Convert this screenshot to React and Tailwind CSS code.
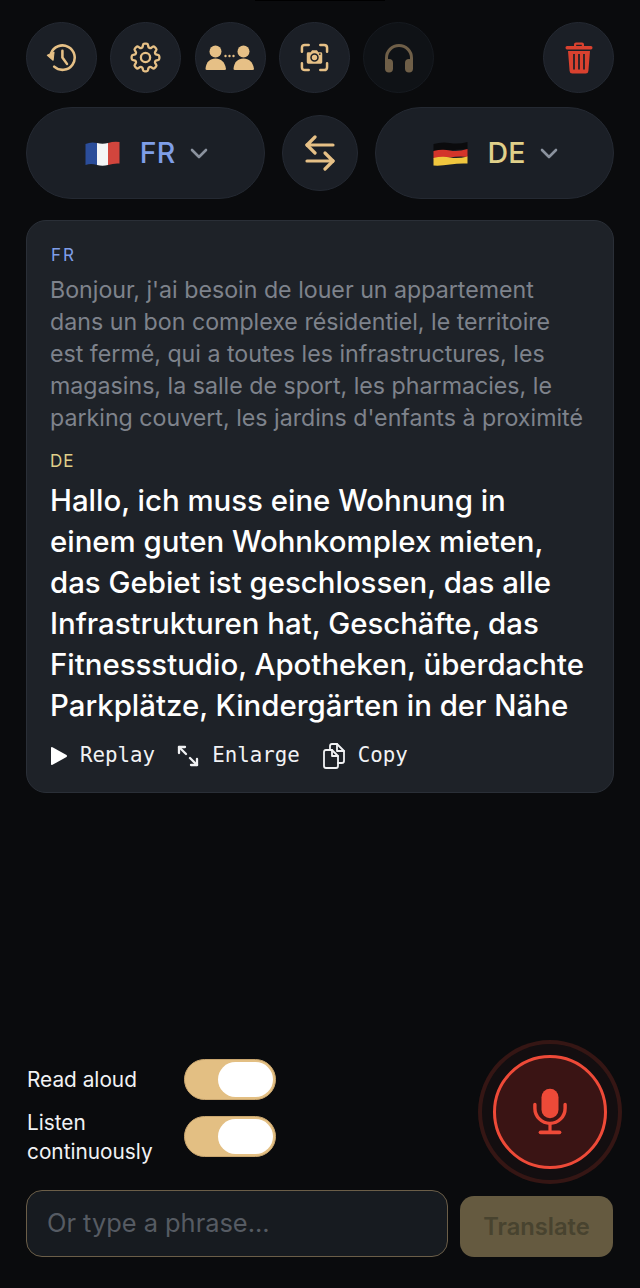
import React from "react";
import { HiOutlineCog8Tooth } from "react-icons/hi2";

const Round = ({ children, dim }) => (
  <div className={`w-[71px] h-[71px] rounded-full border flex items-center justify-center shrink-0 ${dim ? "bg-[#0f1216] border-[#161a20]" : "bg-[#1b1f26] border-[#242932]"}`}>
    {children}
  </div>
);

const HistoryIcon = () => (
  <svg width="31" height="31" viewBox="0 0 34 34" fill="none" stroke="#e6c086" strokeWidth="2.8" strokeLinecap="round" strokeLinejoin="round">
    <path d="M5.5 12.5 A13.4 13.4 0 1 1 9 27" />
    <path d="M1.5 14.5 L8.8 11.2 L7.8 20 Z" fill="#e6c086" strokeWidth="1.2" />
    <path d="M18 9.5 V17 L23 24" />
  </svg>
);

const PeopleIcon = () => (
  <svg width="50" height="26" viewBox="0 0 50 26" fill="#e6c086">
    <circle cx="10.5" cy="6.5" r="6" />
    <path d="M0.5 24 C1 17 5 13.5 10.5 13.5 S20 17 21 24 Q21 25 19.5 25 H2 Q0.5 25 0.5 24 Z" />
    <circle cx="38.5" cy="6.5" r="6" />
    <path d="M28.5 24 C29 17 33 13.5 38.5 13.5 S48 17 49 24 Q49 25 47.5 25 H30 Q28.5 25 28.5 24 Z" />
    <circle cx="20.5" cy="11" r="1.2" />
    <circle cx="24.5" cy="11" r="1.2" />
    <circle cx="28.5" cy="11" r="1.2" />
  </svg>
);

const CameraScanIcon = () => (
  <svg width="29" height="29" viewBox="0 0 30 30" fill="none">
    <g stroke="#e6c086" strokeWidth="2.6" strokeLinecap="round">
      <path d="M9 2 H5 Q2 2 2 5 V9" />
      <path d="M21 2 H25 Q28 2 28 5 V9" />
      <path d="M9 28 H5 Q2 28 2 25 V21" />
      <path d="M21 28 H25 Q28 28 28 25 V21" />
    </g>
    <path d="M7 11 Q7 9.5 8.5 9.5 H11 L12.5 7.5 H17.5 L19 9.5 H21.5 Q23 9.5 23 11 V20 Q23 21.5 21.5 21.5 H8.5 Q7 21.5 7 20 Z" fill="#e6c086" />
    <circle cx="15" cy="15" r="3.6" fill="#e6c086" stroke="#1b1f26" strokeWidth="1.6" />
    <circle cx="20.5" cy="11.5" r="0.9" fill="#1b1f26" />
  </svg>
);

const HeadphonesIcon = () => (
  <svg width="30" height="30" viewBox="0 0 30 30" fill="none">
    <path d="M2.5 20 V15 A12.5 12.5 0 0 1 27.5 15 V20" stroke="#6f5f48" strokeWidth="3" />
    <rect x="1" y="16" width="8" height="13.5" rx="4" fill="#6f5f48" />
    <rect x="21" y="16" width="8" height="13.5" rx="4" fill="#6f5f48" />
  </svg>
);

const TrashIcon = () => (
  <svg width="28" height="32" viewBox="0 0 28 32" fill="#d9412f">
    <path d="M9 4 V2.5 Q9 0.5 11 0.5 H17 Q19 0.5 19 2.5 V4 H26 Q27.5 4 27.5 5.5 Q27.5 7.4 26 7.4 H2 Q0.5 7.4 0.5 5.5 Q0.5 4 2 4 Z M11.2 4 H16.8 V2.7 H11.2 Z" fillRule="evenodd" />
    <path d="M3 9 H25 L23.4 29 Q23.2 31.5 20.7 31.5 H7.3 Q4.8 31.5 4.6 29 Z" />
    <g stroke="#1b1f26" strokeWidth="1.7">
      <path d="M9 12 V27.5" />
      <path d="M14 12 V27.5" />
      <path d="M19 12 V27.5" />
    </g>
  </svg>
);

const Chevron = () => (
  <svg width="18" height="11" viewBox="0 0 18 11" fill="none" stroke="#8b929e" strokeWidth="2.6" strokeLinecap="round" strokeLinejoin="round">
    <path d="M2 2 L9 9 L16 2" />
  </svg>
);

const FlagFR = () => (
  <svg width="35" height="25" viewBox="0 0 35 25">
    <path d="M0.5 3 Q6 0.5 12 2 V24 Q6 22 0.5 24 Z" fill="#2b4d9a" />
    <path d="M12 2 Q17.5 3.5 23 2 V24 Q17.5 25.5 12 24 Z" fill="#f4f5f6" />
    <path d="M23 2 Q29 0 34.5 1 V22.5 Q29 22 23 24 Z" fill="#d2453d" />
  </svg>
);

const FlagDE = () => (
  <svg width="35" height="25" viewBox="0 0 35 25">
    <path d="M0.5 3 Q9 0.5 17 2 T34.5 1 V8.5 Q26 8 17 9.5 T0.5 10.5 Z" fill="#0b0b0d" />
    <path d="M0.5 10 Q9 8 17 9.5 T34.5 8 V16 Q26 15 17 16.5 T0.5 17.5 Z" fill="#d3342a" />
    <path d="M0.5 17 Q9 15 17 16.5 T34.5 15.5 V22.5 Q26 22 17 23.5 T0.5 24.5 Z" fill="#f0c63e" />
  </svg>
);

const SwapIcon = () => (
  <svg width="30" height="36" viewBox="0 0 30 36" fill="none" stroke="#e6c086" strokeWidth="3.2" strokeLinecap="round" strokeLinejoin="round">
    <path d="M28 10 H2 L10 2" />
    <path d="M2 10 L10 18" />
    <path d="M2 26 H28 L20 18" />
    <path d="M28 26 L20 34" />
  </svg>
);

const Pill = ({ flag, code, color }) => (
  <div className="flex-1 h-[92px] rounded-[46px] bg-[#1b1f26] border border-[#242932] flex items-center justify-center pl-[2px]">
    {flag}
    <span className={`ml-[20px] mr-[15px] text-[28.5px] font-medium font-['Inter',sans-serif] ${color}`}>{code}</span>
    <Chevron />
  </div>
);

const Toggle = () => (
  <div className="w-[92px] h-[41px] rounded-full bg-[#e3bf83] border border-[#c9a66f] flex items-center justify-end pr-[2px]">
    <div className="w-[55px] h-[35px] rounded-full bg-white" />
  </div>
);

const Action = ({ icon, label, className }) => (
  <div className={`flex items-center ${className}`}>
    {icon}
    <span className="text-[20.8px] text-[#f1f2f4] font-['DejaVu_Sans_Mono',monospace]">{label}</span>
  </div>
);

export default function App() {
  return (
    <div className="relative w-[640px] h-[1288px] bg-[#0a0b0d] px-[26px] flex flex-col font-['Inter',sans-serif] overflow-hidden">
      <div className="absolute top-0 left-[255px] w-[130px] h-px bg-black" />
      <div className="flex items-center justify-between mt-[22px]">
        <div className="flex gap-[13.25px]">
          <Round><HistoryIcon /></Round>
          <Round><HiOutlineCog8Tooth size={37} color="#e6c086" /></Round>
          <Round><PeopleIcon /></Round>
          <Round><CameraScanIcon /></Round>
          <Round dim><HeadphonesIcon /></Round>
        </div>
        <Round><TrashIcon /></Round>
      </div>

      <div className="flex items-center gap-[17px] mt-[14px]">
        <Pill flag={<FlagFR />} code="FR" color="text-[#7f9ee8]" />
        <div className="w-[76px] h-[76px] rounded-full bg-[#1b1f26] border border-[#242932] flex items-center justify-center shrink-0">
          <SwapIcon />
        </div>
        <Pill flag={<FlagDE />} code="DE" color="text-[#e0d08a]" />
      </div>

      <div className="mt-[21px] h-[573px] rounded-[20px] bg-[#1e2228] border border-[#2a2f37] pl-[23px] pr-[20px] pt-[24px]">
        <div className="pl-px text-[17px] leading-[20px] tracking-[2px] text-[#7f9ee8]">FR</div>
        <p className="mt-[9px] w-[537px] text-[23.2px] leading-[32px] text-[#7e838c]">
          Bonjour, j'ai besoin de louer un appartement dans un bon complexe résidentiel, le territoire est fermé, qui a toutes les infrastructures, les magasins, la salle de sport, les pharmacies, le parking couvert, les jardins d'enfants à proximité
        </p>
        <div className="mt-[17px] text-[17px] leading-[20px] tracking-[1px] text-[#e0d08a]">DE</div>
        <p className="mt-[9px] text-[29.4px] leading-[41px] font-medium text-white">
          Hallo, ich muss eine Wohnung in einem guten Wohnkomplex mieten, das Gebiet ist geschlossen, das alle Infrastrukturen hat, Geschäfte, das Fitnessstudio, Apotheken, überdachte Parkplätze, Kindergärten in der Nähe
        </p>
        <div className="flex items-center mt-[14px]">
          <Action
            label="Replay"
            className="gap-[12px]"
            icon={<svg width="18" height="20" viewBox="0 0 18 20" fill="#ffffff"><path d="M1 2 Q1 0.5 2.5 1.2 L16.5 9 Q17.5 10 16.5 11 L2.5 18.8 Q1 19.5 1 18 Z" /></svg>}
          />
          <Action
            label="Enlarge"
            className="gap-[13px] ml-[22px]"
            icon={<svg width="22" height="22" viewBox="0 0 22 22" fill="none" stroke="#f1f2f4" strokeWidth="2.3" strokeLinecap="round" strokeLinejoin="round"><path d="M2 8 V2 H8" /><path d="M2 2 L9 9" /><path d="M20 14 V20 H14" /><path d="M20 20 L13 13" /></svg>}
          />
          <Action
            label="Copy"
            className="gap-[13px] ml-[23px]"
            icon={<svg width="22" height="26" viewBox="0 0 22 26" fill="none" stroke="#f1f2f4" strokeWidth="1.8" strokeLinecap="round" strokeLinejoin="round"><path d="M7 7 V3 Q7 1 9 1 H14 L21 8 V18 Q21 20 19 20 H15" /><path d="M14 1 V8 H21" /><path d="M1 9 Q1 7 3 7 H9 L15 13 V23 Q15 25 13 25 H3 Q1 25 1 23 Z" /><path d="M9 7 V13 H15" /></svg>}
          />
        </div>
      </div>

      <div className="mt-auto flex items-center justify-between">
        <div className="flex flex-col gap-[8px] w-[250px] pl-px">
          <div className="flex items-center">
            <span className="w-[158px] text-[20.8px] leading-[29px] text-[#f1f2f4]">Read aloud</span>
            <Toggle />
          </div>
          <div className="flex items-center">
            <span className="w-[158px] text-[20.8px] leading-[29px] text-[#f1f2f4]">Listen continuously</span>
            <Toggle />
          </div>
        </div>
        <div className="mr-[7px] w-[114px] h-[114px] rounded-full border-[3px] border-[#ee4a38] bg-[#3a1414] flex items-center justify-center shadow-[0_0_0_11px_#130e10,0_0_0_15px_#351614]">
          <svg width="34" height="48" viewBox="0 0 36 50" fill="#ee4a38">
            <rect x="9" y="0.5" width="18" height="31" rx="9" />
            <path d="M2 17 V21 A16 16 0 0 0 34 21 V17" fill="none" stroke="#ee4a38" strokeWidth="3.6" strokeLinecap="round" />
            <path d="M18 37 V46" stroke="#ee4a38" strokeWidth="3.4" />
            <rect x="6" y="44.5" width="24" height="4" rx="2" />
          </svg>
        </div>
      </div>

      <div className="flex items-end gap-[12px] mt-[21px] mb-[31px] pr-px">
        <div className="flex-1 h-[67px] rounded-[16px] bg-[#171b20] border border-[#6b5e48] flex items-center pl-[20px]">
          <span className="text-[25.4px] text-[#565b63]">Or type a phrase...</span>
        </div>
        <div className="w-[153px] h-[61px] rounded-[14px] bg-[#655a40] flex items-center justify-center">
          <span className="text-[23.7px] font-semibold text-[#48432f]">Translate</span>
        </div>
      </div>
    </div>
  );
}
